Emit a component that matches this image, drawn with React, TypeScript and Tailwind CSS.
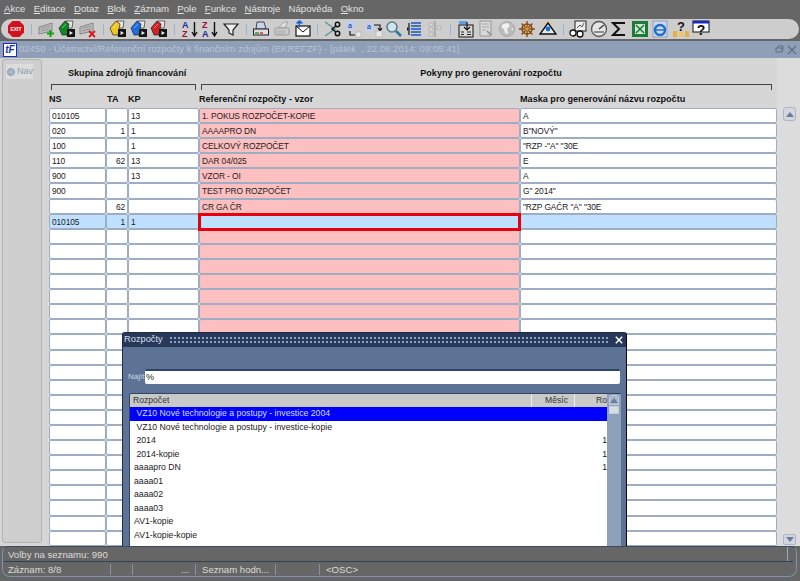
import React from "react";

const menus = [
  ["A", "kce"], ["E", "ditace"], ["D", "otaz"], ["B", "lok"], ["Z", "áznam"],
  ["P", "ole"], ["F", "unkce"], ["N", "ástroje"], ["Nápov", "ěda"], ["O", "kno"],
];

const rows = [
  ["010105", "", "13", "1. POKUS ROZPOČET-KOPIE", "A"],
  ["020", "1", "1", "AAAAPRO DN", 'B"NOVÝ"'],
  ["100", "", "1", "CELKOVÝ ROZPOČET", '"RZP -"A" "30E'],
  ["110", "62", "13", "DAR 04/025", "E"],
  ["900", "", "13", "VZOR - OI", "A"],
  ["900", "", "", "TEST PRO ROZPOČET", 'G" 2014"'],
  ["", "62", "", "CR GA ČR", '"RZP GAČR "A" "30E'],
  ["010105", "1", "1", "", ""],
];
const emptyRows = Array.from({ length: 21 }, (_, i) => i);

const budgets = [
  [" VZ10 Nové technologie a postupy - investice 2004", ""],
  [" VZ10 Nové technologie a postupy - investice-kopie", ""],
  [" 2014", "1"],
  [" 2014-kopie", "1"],
  ["aaaapro DN", "1"],
  ["aaaa01", ""],
  ["aaaa02", ""],
  ["aaaa03", ""],
  ["AV1-kopie", ""],
  ["AV1-kopie-kopie", ""],
];

function Card({ color }: { color: string }) {
  return (
    <svg viewBox="0 0 18 18" className="w-[18px] h-[18px]">
      <path d="M8 1 H15 L14 8 H8 Z" fill="#e6e6e6" stroke="#333" strokeWidth="0.7" />
      <path d="M1 8 L7 1 L11 4 L9 15 L4 15 Z" fill={color} stroke="#222" strokeWidth="0.7" />
      <path d="M4 8 L8 4" stroke="#fff" strokeWidth="0.7" opacity="0.6" />
      <rect x="9" y="9" width="8" height="8" fill="#151515" />
      <path d="M11.5 11 V15 L15 13 Z" fill="#eee" />
    </svg>
  );
}

function Sheet({ children }: { children: React.ReactNode }) {
  return (
    <svg viewBox="0 0 18 18" className="w-[18px] h-[18px]">
      <path d="M1 7 L14 3 V11 L1 14 Z" fill="#bbb" stroke="#777" strokeWidth="0.8" />
      <path d="M3 8.5 L12 6 M3 11 L12 8.5" stroke="#8a8a8a" strokeWidth="0.8" />
      {children}
    </svg>
  );
}

const S = "w-[18px] h-[18px]";

const icons: (React.ReactNode | null)[] = [
  <svg viewBox="0 0 18 18" className={S}>
    <path d="M5.5 1 H12.5 L17 5.5 V12.5 L12.5 17 H5.5 L1 12.5 V5.5 Z" fill="#d4101c" />
    <text x="9" y="11" fontSize="5" fontWeight="700" fill="#fff" textAnchor="middle">EXIT</text>
  </svg>,
  null,
  <Sheet><path d="M12.5 10 V17 M9 13.5 H16" stroke="#12a012" strokeWidth="2" /></Sheet>,
  <Card color="#0f8a22" />,
  <Sheet><path d="M10 11 L16 17 M16 11 L10 17" stroke="#d81818" strokeWidth="1.8" /></Sheet>,
  null,
  <Card color="#f2c81e" />,
  <Card color="#1c6fe0" />,
  <Card color="#d02028" />,
  null,
  <svg viewBox="0 0 18 18" className={S}>
    <text x="1" y="8" fontSize="9" fontWeight="700" fill="#1a2a9a">A</text>
    <text x="1" y="17" fontSize="9" fontWeight="700" fill="#9a1030">Z</text>
    <path d="M13.5 2 V15 M11 12 L13.5 16 L16 12" stroke="#111" strokeWidth="1.4" fill="none" />
  </svg>,
  <svg viewBox="0 0 18 18" className={S}>
    <text x="1" y="8" fontSize="9" fontWeight="700" fill="#9a1030">Z</text>
    <text x="1" y="17" fontSize="9" fontWeight="700" fill="#1a2a9a">A</text>
    <path d="M13.5 2 V15 M11 12 L13.5 16 L16 12" stroke="#111" strokeWidth="1.4" fill="none" />
  </svg>,
  <svg viewBox="0 0 18 18" className={S}>
    <path d="M2 4 H16 L11 10 V15 L7 13 V10 Z" fill="#eee" stroke="#222" strokeWidth="1.2" />
  </svg>,
  null,
  <svg viewBox="0 0 18 18" className={S}>
    <path d="M5 2 H12 L14 9 H4 Z" fill="#c8d4ea" stroke="#223" strokeWidth="0.8" />
    <rect x="1.5" y="9" width="15" height="6" fill="#ddd" stroke="#222" />
    <path d="M3 13 H7" stroke="#1a9a2a" strokeWidth="1.4" />
    <path d="M8 13 H11" stroke="#d42020" strokeWidth="1.4" />
  </svg>,
  <svg viewBox="0 0 18 18" className={S}>
    <path d="M6 7 L11 2 H15 L12 8 Z" fill="#ddd" stroke="#999" strokeWidth="0.8" />
    <rect x="2" y="8" width="14" height="7" rx="1" fill="#ccc" stroke="#999" />
    <path d="M4 11 H13 M4 13 H13" stroke="#aaa" />
  </svg>,
  <svg viewBox="0 0 18 18" className={S}>
    <rect x="3" y="6" width="14" height="10" fill="#fff" stroke="#111" strokeWidth="1.2" />
    <path d="M3 6 L10 12 L17 6" fill="none" stroke="#111" />
    <path d="M6 8 V3 H3.5 L6.5 0.5 L9.5 3 H7" fill="#0b60d8" stroke="#0b60d8" />
  </svg>,
  null,
  <svg viewBox="0 0 18 18" className={S}>
    <path d="M1 2 L11 9 L1 16" fill="none" stroke="#5f9a94" strokeWidth="1.5" />
    <circle cx="13.5" cy="4.5" r="2.2" fill="none" stroke="#111" strokeWidth="1.5" />
    <circle cx="13.5" cy="13.5" r="2.2" fill="none" stroke="#111" strokeWidth="1.5" />
    <path d="M12 6 L8 9 L12 12" fill="none" stroke="#111" strokeWidth="1.4" />
  </svg>,
  <svg viewBox="0 0 18 18" className={S}>
    <rect x="3" y="1" width="7" height="9" fill="#bcd0f2" />
    <text x="4" y="8" fontSize="7" fill="#0b1fa0">a</text>
    <path d="M6 11 V15 H11" stroke="#111" fill="none" strokeWidth="1.2" />
    <rect x="12" y="12" width="5" height="5" fill="#e8e8e8" stroke="#aaa" strokeWidth="0.6" />
  </svg>,
  <svg viewBox="0 0 18 18" className={S}>
    <rect x="1" y="3" width="7" height="8" fill="#bcd0f2" />
    <text x="2" y="9" fontSize="7" fill="#0b1fa0">a</text>
    <path d="M9 5 H15 V10 M13 8 L15 11 L17 8" stroke="#111" fill="none" strokeWidth="1.1" />
    <rect x="11" y="11" width="6" height="6" fill="#e8e8e8" stroke="#aaa" strokeWidth="0.6" />
  </svg>,
  <svg viewBox="0 0 18 18" className={S}>
    <circle cx="7" cy="7" r="5" fill="#cfe4ee" stroke="#5d7e8c" strokeWidth="1.6" />
    <path d="M11 11 L16 16" stroke="#2c7c98" strokeWidth="2.6" />
  </svg>,
  <svg viewBox="0 0 18 18" className={S}>
    <path d="M3 3 V15" stroke="#111" strokeWidth="1.2" />
    <path d="M1 7 L3 9 L1 11 Z" fill="#111" />
    <path d="M5 3 H15 M5 6 H15 M5 9 H15 M5 12 H15 M5 15 H15" stroke="#1b55c8" strokeWidth="1.6" />
  </svg>,
  <svg viewBox="0 0 18 18" className={S}>
    <path d="M9 1 V17" stroke="#999" strokeWidth="1.2" />
    <path d="M3 3 H7 V6 H3 Z M3 8 H7 V11 H3 Z M3 13 H7 V16 H3 Z M11 6 H15 V9 H11 Z" fill="#ddd" stroke="#aaa" strokeWidth="0.8" />
  </svg>,
  null,
  <svg viewBox="0 0 18 18" className={S}>
    <rect x="2" y="5" width="14" height="12" fill="#d8d8d8" stroke="#111" />
    <rect x="2" y="1" width="8" height="3" fill="#5aa0e8" />
    <path d="M10 2 V9 M7 7 L10 10 L13 7" stroke="#111" fill="none" strokeWidth="1.2" />
    <path d="M4 12 H7 M4 14.5 H7 M10 12 H14 M10 14.5 H14" stroke="#222" strokeWidth="1.2" />
  </svg>,
  <svg viewBox="0 0 18 18" className={S}>
    <path d="M3 1 H14 V16 H3 Z" fill="#d8d8d8" stroke="#999" />
    <path d="M5 4 H12 M5 7 H12 M5 10 H9" stroke="#aaa" />
    <path d="M10 11 L14 15" stroke="#888" strokeWidth="1.4" />
  </svg>,
  <svg viewBox="0 0 18 18" className={S}>
    <circle cx="9" cy="9" r="7.5" fill="#bbb" stroke="#aaa" />
    <path d="M5 4 L10 3 L12 6 L9 9 L10 14 L7 13 L6 9 L3 7 Z M13 9 L15 8 L15 11 Z" fill="#f0f0f0" />
  </svg>,
  <svg viewBox="0 0 18 18" className={S}>
    <circle cx="9" cy="9" r="5" fill="none" stroke="#8a4a10" strokeWidth="1.6" />
    <path d="M9 1 V17 M1 9 H17 M3.5 3.5 L14.5 14.5 M14.5 3.5 L3.5 14.5" stroke="#8a4a10" strokeWidth="1.4" />
    <circle cx="9" cy="9" r="1.8" fill="#d8a030" />
  </svg>,
  <svg viewBox="0 0 18 18" className={S}>
    <path d="M9 3 L17 14 H1 Z" fill="#e8e8e8" stroke="#111" strokeWidth="1.4" />
    <circle cx="9" cy="9" r="2.4" fill="#1670d8" />
    <path d="M4 2 L6 4 M9 0 V2 M14 2 L12 4" stroke="#e8c020" strokeWidth="1" />
  </svg>,
  null,
  <svg viewBox="0 0 18 18" className={S}>
    <rect x="6" y="1" width="11" height="10" fill="#eee" stroke="#222" />
    <path d="M8 8 L11 5 L13 7 L15 3" stroke="#555" fill="none" />
    <circle cx="4" cy="13" r="3" fill="#fff" stroke="#111" strokeWidth="1.3" />
    <circle cx="11" cy="14" r="3" fill="#fff" stroke="#111" strokeWidth="1.3" />
  </svg>,
  <svg viewBox="0 0 18 18" className={S}>
    <circle cx="9" cy="9" r="7.5" fill="#e4e4e4" stroke="#555" strokeWidth="1.3" />
    <path d="M9 9 L14 5" stroke="#333" strokeWidth="1.2" />
    <path d="M4 12 H14" stroke="#777" strokeWidth="1.6" />
  </svg>,
  <svg viewBox="0 0 18 18" className={S}>
    <path d="M15 3 H3 L9 9 L3 15 H15" fill="none" stroke="#111" strokeWidth="2" />
  </svg>,
  <svg viewBox="0 0 18 18" className={S}>
    <rect x="1" y="1" width="16" height="16" fill="#1d7a3a" />
    <rect x="4" y="4" width="10" height="10" fill="#cfe8d4" />
    <path d="M5 5 L13 13 M13 5 L5 13" stroke="#1d7a3a" strokeWidth="1.6" />
  </svg>,
  <svg viewBox="0 0 18 18" className={S}>
    <rect x="2" y="1" width="14" height="16" fill="#cdd8ea" stroke="#8ca0c0" />
    <circle cx="9" cy="10" r="5" fill="none" stroke="#1a6fd0" strokeWidth="2.4" />
    <path d="M5 10 H13" stroke="#1a6fd0" strokeWidth="1.4" />
  </svg>,
  <svg viewBox="0 0 18 18" className={S}>
    <rect x="1" y="11" width="4" height="6" fill="#e8b040" />
    <rect x="7" y="12" width="4" height="5" fill="#f0c860" />
    <rect x="13" y="11" width="4" height="6" fill="#e8b040" />
    <text x="9" y="11" fontSize="13" fontWeight="700" fill="#111" textAnchor="middle">?</text>
  </svg>,
  <svg viewBox="0 0 18 18" className={S}>
    <rect x="1" y="1" width="16" height="11" fill="#fff" stroke="#111" />
    <rect x="1" y="1" width="16" height="2.5" fill="#1228c8" />
    <text x="9" y="15" fontSize="14" fontWeight="700" fill="#111" textAnchor="middle">?</text>
  </svg>,
];

const cell = "h-full border border-[#9dadc4] rounded-[2px] px-[2px] text-[8.4px] tracking-[-0.1px] leading-[14px] overflow-hidden whitespace-nowrap";
const rowGrid = "grid grid-cols-[57px_22px_71px_321px_257px] h-[15.1px]";

function Arrow({ down }: { down?: boolean }) {
  return (
    <svg viewBox="0 0 10 6" className="w-[8px] h-[5px]">
      <path d={down ? "M0 0 H10 L5 6 Z" : "M0 6 H10 L5 0 Z"} fill="#6a7da0" />
    </svg>
  );
}

export default function App() {
  return (
    <div className="w-[800px] h-[581px] overflow-hidden flex flex-col bg-[#666666] font-['Liberation_Sans',Arial,sans-serif] text-[10px] text-[#222]">
      {/* menu */}
      <div className="h-[19px] flex items-center gap-[8.3px] pl-[4px] text-[#e2e2e2] text-[9.6px]">
        {menus.map(([a, b], i) => (
          <span key={i}>
            {i === 8 ? "Nápov" : <span className="underline">{a}</span>}
            {b}
          </span>
        ))}
      </div>

      {/* toolbar */}
      <div className="h-[20px] shrink-0 mr-[1px] ml-[1px] rounded-[10px] bg-[#cdcdcd] flex items-center pl-[5px]">
        {icons.map((ic, i) =>
          ic === null ? (
            <div key={i} className="w-[10px] flex justify-center">
              <div className="w-[1px] h-[11px] bg-[#9db3d2]" />
            </div>
          ) : (
            <div key={i} className="w-[20.5px] flex justify-center items-center">
              {ic}
            </div>
          )
        )}
      </div>

      {/* main window */}
      <div className="relative mt-[2px] h-[505px] shrink-0 flex flex-col overflow-hidden bg-[#d6d6d6]">
        <div className="h-[17px] shrink-0 bg-[#8e9fb7] flex items-center pl-[3px] pr-[3px] text-[#b9c4d3]">
          <div className="w-[14px] h-[14px] bg-white border border-[#1a2fb0] flex items-center justify-center text-[#1230c0] font-bold italic text-[10px] leading-none">
            tF
          </div>
          <span className="ml-[2px] flex-1 text-[9.55px] whitespace-pre">
            02450 - Účetnictví/Referenční rozpočty k finančním zdojům (EKREFZF) - [pátek  , 22.08.2014; 09:05:41]
          </span>
          <svg viewBox="0 0 22 10" className="w-[22px] h-[10px]">
            <path d="M3 3 H7 V7 H1 V3 Z M3 3 V1 H8 V5 H7" fill="none" stroke="#5f6f86" />
            <path d="M13 1 L21 9 M21 1 L13 9" stroke="#5f6f86" strokeWidth="1.4" />
          </svg>
        </div>

        <div className="flex flex-1 min-h-0">
          {/* nav strip */}
          <div className="ml-[2px] w-[40px] h-[484px] mt-[1px] shrink-0 bg-[#cfcfcf] border border-[#b4b4b4] rounded-[3px] pt-[4px] pl-[3px]">
            <div className="w-[27px] h-[15px] bg-[#dcdcdc] flex items-center gap-[2px] pl-[1px] text-[#8d9db3] text-[9px]">
              <span className="w-[8px] h-[8px] rounded-full border border-[#8d9db3] bg-[#a9b6c7] shrink-0" />
              Nav
            </div>
          </div>

          <div className="ml-[7px] w-[728px] shrink-0 flex flex-col">
            <div className="h-[16px] mt-[7px] flex font-bold text-[9.1px] text-[#111] leading-[16px]">
              <div className="w-[150px] pl-[19px]">Skupina zdrojů financování</div>
              <div className="w-[578px] text-center pl-[6px]">Pokyny pro generování rozpočtu</div>
            </div>
            <div className="h-[6px] mt-[3px] flex">
              <div className="ml-[2px] w-[145px] border-t-[1.5px] border-x border-[#444]" />
              <div className="ml-[5px] w-[571px] border-t-[1.5px] border-x border-[#444]" />
            </div>
            <div className="grid grid-cols-[57px_22px_71px_321px_257px] h-[16px] mt-[2px] font-bold text-[9.1px] text-[#111] leading-[14px]">
              <div>NS</div>
              <div className="pl-[1px]">TA</div>
              <div>KP</div>
              <div>Referenční rozpočty - vzor</div>
              <div>Maska pro generování názvu rozpočtu</div>
            </div>

            {rows.map((r, i) => {
              const active = i === 7;
              const bg = active ? "bg-[#bfe0ff]" : "bg-white";
              return (
                <div key={i} className={rowGrid}>
                  <div className={`${cell} ${bg}`}>{r[0]}</div>
                  <div className={`${cell} ${bg} text-right`}>{r[1]}</div>
                  <div className={`${cell} ${bg}`}>{r[2]}</div>
                  {active ? (
                    <div className={`${cell} bg-[#bfe0ff] relative overflow-visible`}>
                      <div className="absolute -left-[2px] -right-[2px] -top-[2px] -bottom-[3px] border-[3px] border-[#e8000c]" />
                    </div>
                  ) : (
                    <div className={`${cell} bg-[#fdbfbf]`}>{r[3]}</div>
                  )}
                  <div className={`${cell} ${bg}`}>{r[4]}</div>
                </div>
              );
            })}
            {emptyRows.map((i) => (
              <div key={i} className={rowGrid}>
                <div className={`${cell} bg-white`} />
                <div className={`${cell} bg-white`} />
                <div className={`${cell} bg-white`} />
                <div className={`${cell} bg-[#fdbfbf]`} />
                <div className={`${cell} bg-white`} />
              </div>
            ))}
          </div>

          {/* form scrollbar */}
          <div className="flex-1 flex flex-col items-center bg-[#dcdcdc] pt-[49px] pb-[1px] pl-[2px]">
            <div className="w-[13px] h-[14px] border border-[#aab6c8] rounded-[3px] bg-[#d3d6dc] flex items-center justify-center">
              <Arrow />
            </div>
            <div className="flex-1" />
            <div className="w-[13px] h-[11px] border border-[#aab6c8] rounded-[2px] bg-[#d3d6dc] flex items-center justify-center">
              <Arrow down />
            </div>
          </div>
        </div>

        {/* list of values dialog */}
        <div className="absolute left-[122px] top-[291px] w-[505px] h-[240px] bg-[#5d7396] border border-[#1d2c44] border-r-[#0a0a0a] rounded-t-[3px] flex flex-col">
          <div className="h-[14px] shrink-0 bg-[#27395a] flex items-center pl-[1px] pr-[3px] text-[#d6deea] text-[9.3px]">
            <span>Rozpočty</span>
            <div className="flex-1 h-[9px] mx-[6px] bg-[radial-gradient(#8ea2c0_1px,transparent_1.2px)] bg-[length:4px_4px]" />
            <svg viewBox="0 0 10 10" className="w-[8px] h-[8px]">
              <path d="M1 1 L9 9 M9 1 L1 9" stroke="#fff" strokeWidth="1.8" />
            </svg>
          </div>
          <div className="h-[15px] mt-[22px] shrink-0 flex items-center pl-[5px] text-[#cdd6e3] text-[8px]">
            <span className="w-[17px]">Najít</span>
            <div className="w-[475px] h-[15px] bg-white border-t-[2px] border-[#31456a] rounded-[2px] text-[#222] text-[9px] pl-[1px] leading-[13px]">%</div>
          </div>
          <div className="mt-[9px] ml-[6px] w-[492px] flex-1 min-h-0 flex border-t border-l border-[#31456a] rounded-tl-[3px] overflow-hidden">
            <div className="w-[477px] shrink-0 bg-white flex flex-col overflow-hidden">
              <div className="h-[13px] shrink-0 bg-[#c9c9c9] flex text-[#333] text-[8.6px] leading-[13px]">
                <div className="w-[402px] pl-[3px] border-r border-[#eee]">Rozpočet</div>
                <div className="w-[43px] pr-[6px] text-right border-r border-[#eee]">Měsíc</div>
                <div className="flex-1 pl-[21px] whitespace-nowrap">Ro</div>
              </div>
              {budgets.map(([name, year], i) => (
                <div
                  key={i}
                  className={`h-[13.5px] shrink-0 flex justify-between pl-[4px] leading-[13.5px] whitespace-pre text-[8.7px] ${
                    i === 0 ? "bg-[#0000ff] text-[#d5ddff]" : "text-[#222]"
                  }`}
                >
                  <span>{name}</span>
                  <span>{year}</span>
                </div>
              ))}
            </div>
            <div className="flex-1 bg-[#8fa0b9] flex flex-col items-center pt-[1px]">
              <div className="w-[10px] h-[10px] bg-[#a8b6ca] border border-[#c3cddb] rounded-t-[3px] flex items-center justify-center">
                <Arrow />
              </div>
              <div className="w-[10px] h-[8px] mt-[1px] bg-[#d8dde4] border border-[#c3cddb]" />
            </div>
          </div>
        </div>
      </div>

      {/* status bar */}
      <div className="ml-[2px] mr-[3px] h-[31px] shrink-0 border border-[#8092ad] border-t-[#3b4a60] rounded-[8px] rounded-t-[6px] text-[#dcdcdc] text-[9.6px] flex flex-col">
        <div className="h-[15px] shrink-0 flex border-b border-[#33404f] mr-[3px] ml-[1px]">
          <div className="flex-1 pl-[4px] leading-[16px]">Volby na seznamu: 990</div>
          <div className="w-[6px] border-l border-[#9aa9bf]" />
        </div>
        <div className="flex-1 flex items-center pl-[5px]">
          <div className="w-[103px] h-[11px] leading-[11px] border-r border-[#8092ad]">Záznam: 8/8</div>
          <div className="w-[22px] h-[11px] border-r border-[#8092ad]" />
          <div className="w-[63px] h-[11px] leading-[11px] border-r border-[#8092ad] text-right pr-[6px]">...</div>
          <div className="w-[80px] h-[11px] leading-[11px] border-r border-[#8092ad] pl-[6px]">Seznam hodn...</div>
          <div className="w-[44px] h-[11px] border-r border-[#8092ad]" />
          <div className="pl-[6px] leading-[11px]">&lt;OSC&gt;</div>
        </div>
      </div>
    </div>
  );
}
